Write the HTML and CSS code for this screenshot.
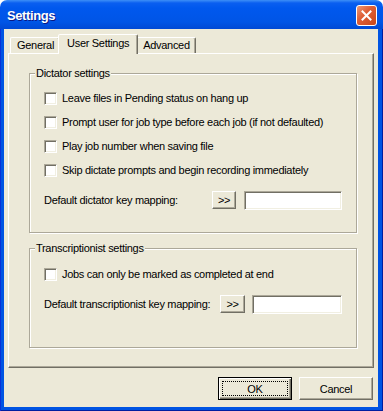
FILE: index.html
```html
<!DOCTYPE html>
<html lang="en">

<head>
    <meta charset="UTF-8">
    <title>Settings</title>
    <link rel="stylesheet" href="styles.css">
</head>

<body>
    <div class="window">
        <div class="titlebar">
            <span class="title">Settings</span>
            <button class="close-btn" aria-label="Close">
                <svg width="11" height="11" viewBox="0 0 11 11">
                    <path d="M1.5 1.5 L9.5 9.5 M9.5 1.5 L1.5 9.5" stroke="#fff" stroke-width="2" stroke-linecap="square" fill="none" />
                </svg>
            </button>
        </div>

        <div class="frame">
            <div class="client">
                <div class="tabs">
                    <div class="tab">General</div>
                    <div class="tab tab-active">User Settings</div>
                    <div class="tab">Advanced</div>
                </div>

                <div class="panel">
                    <fieldset class="group group-dictator">
                        <legend>Dictator settings</legend>
                        <label class="check-row"><span class="checkbox"></span>Leave files in Pending status on hang up</label>
                        <label class="check-row"><span class="checkbox"></span>Prompt user for job type before each job (if not defaulted)</label>
                        <label class="check-row"><span class="checkbox"></span>Play job number when saving file</label>
                        <label class="check-row"><span class="checkbox"></span>Skip dictate prompts and begin recording immediately</label>
                        <div class="key-row">
                            <span class="key-label">Default dictator key mapping:</span>
                            <button class="btn key-btn">&gt;&gt;</button>
                            <span class="key-input key-input-wide"></span>
                        </div>
                    </fieldset>

                    <fieldset class="group group-transcriptionist">
                        <legend>Transcriptionist settings</legend>
                        <label class="check-row"><span class="checkbox"></span>Jobs can only be marked as completed at end</label>
                        <div class="key-row">
                            <span class="key-label">Default transcriptionist key mapping:</span>
                            <button class="btn key-btn key-btn-wide">&gt;&gt;</button>
                            <span class="key-input key-input-narrow"></span>
                        </div>
                    </fieldset>
                </div>

                <div class="actions">
                    <button class="btn dialog-btn default-btn"><span class="focus-ring">OK</span></button>
                    <button class="btn dialog-btn">Cancel</button>
                </div>
            </div>
        </div>
    </div>
</body>

</html>
```

FILE: styles.css
```css
* {
    box-sizing: border-box;
}

body {
    margin: 0;
    font-family: 'Liberation Sans', Arial, sans-serif;
    font-size: 11px;
    letter-spacing: -0.3px;
    color: #000;
}

.window {
    width: 383px;
    height: 411px;
    display: flex;
    flex-direction: column;
    overflow: hidden;
}

/* title bar */
.titlebar {
    height: 29px;
    flex: none;
    display: flex;
    align-items: center;
    justify-content: space-between;
    padding: 0 6px 0 7px;
    background: linear-gradient(#3d8ff7 0, #0a5ff0 3px, #0058ee 8px, #0055e6 22px, #0049d4 29px);
    border-radius: 7px 7px 0 0;
}

.title {
    color: #fff;
    font-weight: bold;
    font-size: 13px;
    letter-spacing: -0.4px;
    text-shadow: 1px 1px #0a1883;
    margin-top: 1px;
}

.close-btn {
    width: 21px;
    height: 21px;
    padding: 0;
    display: flex;
    align-items: center;
    justify-content: center;
    border: 1px solid #fff;
    border-radius: 3px;
    background: linear-gradient(135deg, #ec9a78 0%, #df6038 40%, #c8461a 100%);
    margin-top: 1px;
}

/* window body */
.frame {
    flex: 1;
    padding: 0 5px 4px 4px;
    background: #0054e3;
    box-shadow: inset 1px 0 #0831d9, inset -1px -1px #001ea0;
}

.client {
    height: 100%;
    background: #ece9d8;
    padding: 5px 4px 0 4px;
    display: flex;
    flex-direction: column;
}

/* tabs */
.tabs {
    display: flex;
    align-items: flex-end;
    height: 19px;
    padding-left: 2px;
}

.tab {
    height: 16px;
    line-height: 14px;
    padding: 0 5px 0 6px;
    border: 1px solid;
    border-bottom: none;
    border-color: #fff #716f64 transparent #fff;
    border-radius: 2px 2px 0 0;
    box-shadow: inset -1px 0 #aca899;
    white-space: nowrap;
}

.tab-active {
    position: relative;
    z-index: 1;
    height: 20px;
    line-height: 16px;
    margin: 0 -2px -1px;
    padding: 0 8px;
    background: #ece9d8;
}

.panel {
    height: 315px;
    border: 1px solid;
    border-color: #fff #716f64 #716f64 #fff;
    box-shadow: inset -1px -1px #aca899;
    padding: 13px 16px 0 20px;
}

/* group boxes */
.group {
    margin: 0;
    border: 1px solid #aca899;
    box-shadow: inset 1px 1px #fff, 1px 1px #fff;
    padding: 6px 14px 20px 14px;
}

.group-transcriptionist {
    margin-top: 9px;
    padding-top: 7px;
    padding-bottom: 31px;
}

.group legend {
    margin-left: -9px;
    padding: 0 1px;
    line-height: 13px;
    background: #ece9d8;
}

.check-row {
    height: 24px;
    display: flex;
    align-items: center;
    gap: 5px;
    white-space: nowrap;
}

.checkbox {
    width: 13px;
    height: 13px;
    flex: none;
    background: #fff;
    border: 1px solid;
    border-color: #aca899 #fff #fff #aca899;
    box-shadow: inset 1px 1px #716f64, inset -1px -1px #f1efe2;
}

.key-row {
    height: 24px;
    margin-top: 6px;
    display: flex;
    align-items: center;
}

.key-label {
    flex: 1;
    white-space: nowrap;
}

/* buttons */
.btn {
    font-family: inherit;
    font-size: 11px;
    letter-spacing: -0.3px;
    color: #000;
    background: #ece9d8;
    border: 1px solid;
    border-color: #fff #716f64 #716f64 #fff;
    box-shadow: inset -1px -1px #aca899;
    padding: 0;
}

.key-btn {
    width: 24px;
    height: 18px;
    margin-right: 8px;
    line-height: 14px;
}

.key-btn-wide {
    width: 25px;
    margin-right: 7px;
}

.key-input {
    height: 19px;
    background: #fff;
    border: 1px solid;
    border-color: #aca899 #fff #fff #aca899;
    box-shadow: inset 1px 1px #716f64, inset -1px -1px #f1efe2;
}

.key-input-wide {
    width: 98px;
}

.key-input-narrow {
    width: 90px;
}

.actions {
    display: flex;
    justify-content: flex-end;
    gap: 7px;
    margin-top: 9px;
    padding-right: 1px;
}

.dialog-btn {
    width: 74px;
    height: 23px;
}

.default-btn {
    border-color: #000;
    box-shadow: inset 1px 1px #fff, inset -1px -1px #716f64, inset -2px -2px #aca899;
    padding: 3px;
}

.focus-ring {
    display: flex;
    align-items: center;
    justify-content: center;
    height: 100%;
    border: 1px dotted #000;
}
```
